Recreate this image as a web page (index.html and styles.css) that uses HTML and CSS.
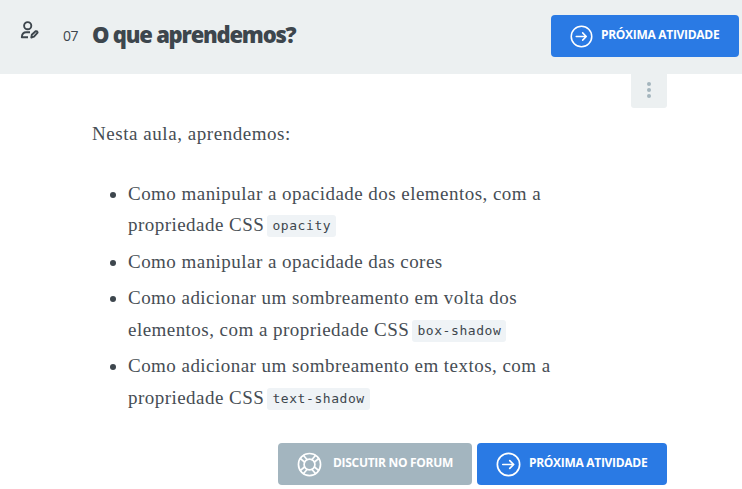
FILE: index.html
```html
<!DOCTYPE html>
<html lang="pt-BR">
<head>
<meta charset="utf-8">
<title>O que aprendemos?</title>
<link rel="stylesheet" href="styles.css">
</head>
<body>
<header class="header">
  <svg class="user-icon" viewBox="0 0 20 20" fill="none" stroke="currentColor" stroke-width="1.9" stroke-linejoin="round">
    <circle cx="7.7" cy="4.7" r="3.6"/>
    <path d="M10 11.3H6.2C3.6 11.3 2 13.4 1.8 16.3H8"/>
    <path d="M11.3 16.5L11.8 13.8L15.6 10.2Q17.3 9.8 17.6 11.6L14 15.7Z"/>
  </svg>
  <span class="number">07</span>
  <h1 class="title">O que aprendemos?</h1>
  <a class="button button-top">
    <svg class="arrow" viewBox="0 0 24 24"><circle cx="12" cy="12" r="10.7"/><path d="M6.5 12H17M13.2 8.2L17 12L13.2 15.8"/></svg>
    <span class="label">PRÓXIMA ATIVIDADE</span>
  </a>
</header>
<main class="content">
  <div class="menu"><i class="dot"></i><i class="dot"></i><i class="dot"></i></div>
  <section class="text">
    <p class="intro">Nesta aula, aprendemos:</p>
    <ul class="list">
      <li>Como manipular a opacidade dos elementos, com a propriedade CSS <code>opacity</code></li>
      <li>Como manipular a opacidade das cores</li>
      <li>Como adicionar um sombreamento em volta dos elementos, com a propriedade CSS <code>box-shadow</code></li>
      <li>Como adicionar um sombreamento em textos, com a propriedade CSS <code>text-shadow</code></li>
    </ul>
  </section>
  <nav class="actions">
    <a class="button button-forum">
      <svg class="buoy" viewBox="0 0 24 24"><circle cx="12" cy="12" r="10.6"/><circle cx="12" cy="12" r="5.2"/><path d="M9.6 7.2L6.3 3.3M7.2 9.6L3.3 6.3M14.4 7.2L17.7 3.3M16.8 9.6L20.7 6.3M16.8 14.4L20.7 17.7M14.4 16.8L17.7 20.7M9.6 16.8L6.3 20.7M7.2 14.4L3.3 17.7"/></svg>
      <span class="label">DISCUTIR NO FORUM</span>
    </a>
    <a class="button button-next">
      <svg class="arrow" viewBox="0 0 24 24"><circle cx="12" cy="12" r="10.7"/><path d="M6.5 12H17M13.2 8.2L17 12L13.2 15.8"/></svg>
      <span class="label">PRÓXIMA ATIVIDADE</span>
    </a>
  </nav>
</main>
</body>
</html>
```
FILE: styles.css
```css
* { box-sizing: border-box; }
body { margin: 0; background: #fff; color: #3d464d; font-family: "Open Sans", sans-serif; }
.header { display: flex; align-items: flex-start; height: 74px; padding-left: 20px; background: #ecf0f1; }
.user-icon { width: 20px; height: 20px; margin-top: 21px; flex: none; }
.number { width: 29px; margin: 26px 0 0 23px; font-size: 14px; line-height: 20px; letter-spacing: -0.5px; }
.title { margin: 18px 0 0; font-size: 22px; line-height: 32px; font-weight: 800; letter-spacing: -1.22px; white-space: nowrap; }
.button { display: flex; align-items: center; height: 42px; border-radius: 4px; background: #2a7ae4; color: #fff; font-size: 12px; font-weight: 700; white-space: nowrap; }
.button svg { flex: none; fill: none; stroke: currentColor; stroke-width: 1.6; stroke-linecap: round; stroke-linejoin: round; }
.label { margin-bottom: 2px; letter-spacing: -0.3px; line-height: 18px; }
.button-top { width: 188px; margin: 15px 3px 0 auto; padding-left: 19px; gap: 8px; }
.button-top svg { width: 23px; height: 23px; }
.content { display: flex; flex-direction: column; width: 575px; margin-left: 92px; }
.menu { display: flex; flex-direction: column; align-items: center; align-self: flex-end; gap: 2px; width: 36px; height: 34px; padding-top: 8px; background: #ecf0f1; border-radius: 0 0 3px 3px; }
.dot { width: 4px; height: 4px; border-radius: 50%; background: #a4b5bd; }
.text { height: 335px; font-family: "Liberation Serif", serif; font-size: 19px; line-height: 31.5px; letter-spacing: 0.46px; color: #464d54; }
.intro { margin: 10px 0 0; letter-spacing: 0.55px; }
.list { width: 480px; margin: 28px 0 0; padding-left: 36px; }
.list li { margin-bottom: 5px; }
.list li::marker { color: #3d464d; }
code { display: inline-block; height: 22px; margin-left: -2px; padding: 3px 5px; border-radius: 3px; background: #eff3f6; color: #3d464d; font: 13px/16px "DejaVu Sans Mono", monospace; letter-spacing: 0.57px; vertical-align: 1px; }
.actions { display: flex; justify-content: flex-end; gap: 5px; }
.button-forum { width: 194px; padding-left: 19px; gap: 11px; background: #a3b5bf; }
.button-next { width: 190px; padding-left: 19px; gap: 8px; }
.actions svg { width: 25px; height: 25px; }
```
